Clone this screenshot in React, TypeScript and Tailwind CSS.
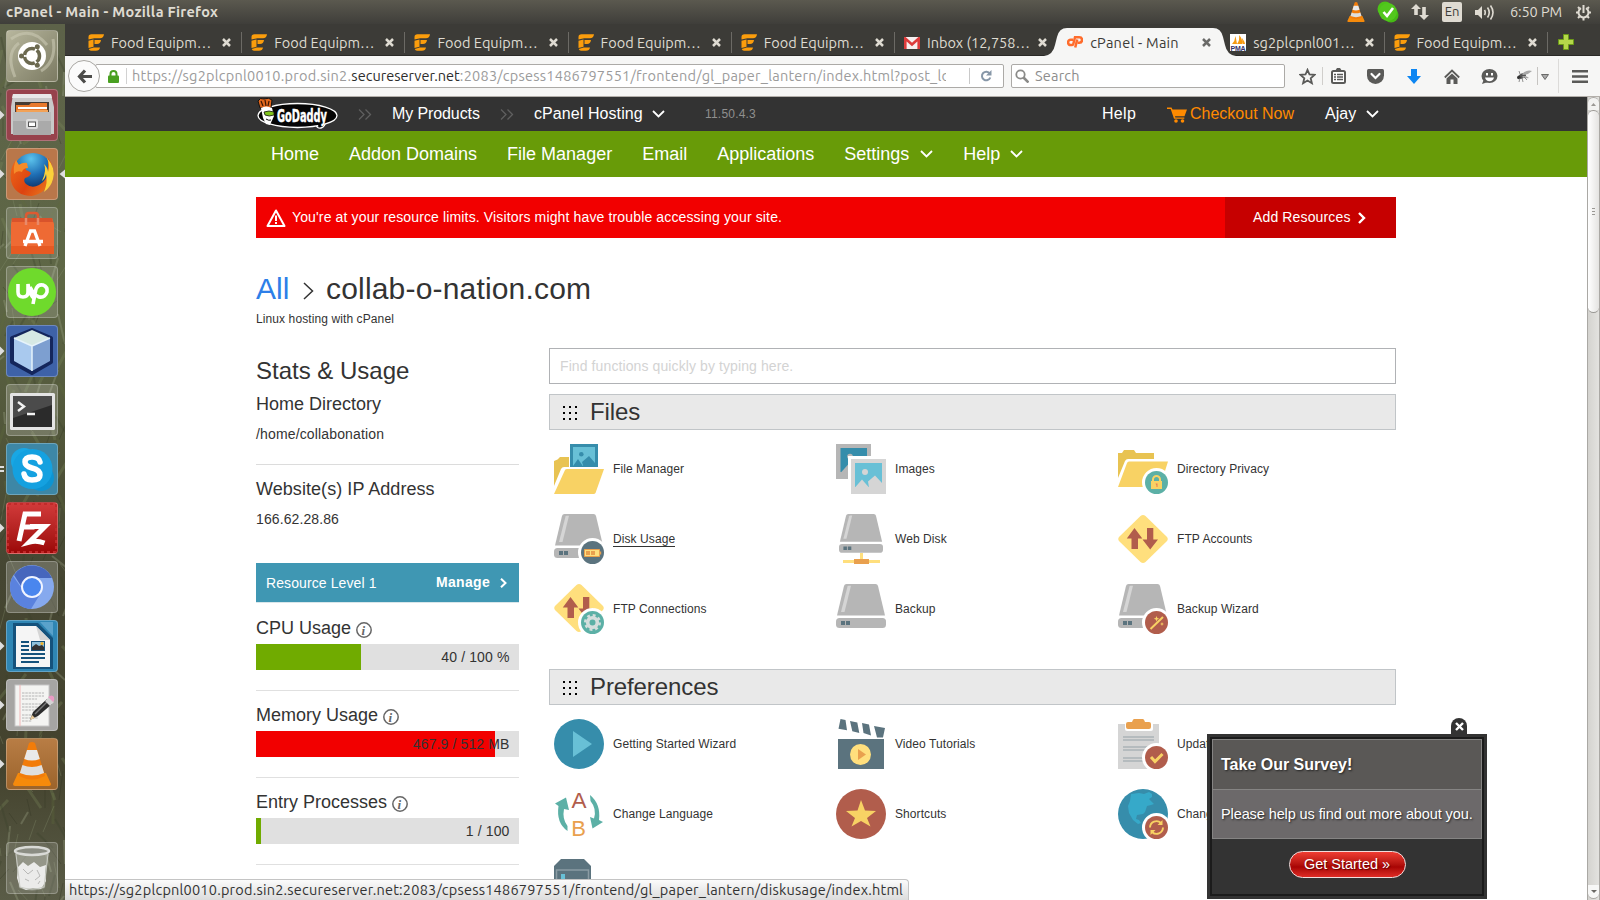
import type { ReactNode } from "react";

const ubuntu = "font-['Ubuntu','Open_Sans','Noto_Sans',sans-serif]";
const helv = "font-['Liberation_Sans',Arial,sans-serif]";

/* ---------- shared glyphs ---------- */

function Chevron({ className }: { className?: string }) {
  return (
    <svg className={className} width="13" height="8" viewBox="0 0 13 8" fill="none" stroke="#fff" strokeWidth="1.8">
      <path d="M1 1l5.5 5.5L12 1" />
    </svg>
  );
}

function Cross({ color }: { color: string }) {
  return (
    <svg width="9" height="9" viewBox="0 0 9 9" stroke={color} strokeWidth="2.5" className="shrink-0">
      <path d="M1 1l7 7M8 1L1 8" />
    </svg>
  );
}

function Cone({ size }: { size: number }) {
  return (
    <svg width={size} height={size} viewBox="0 0 40 44">
      <path d="M6 31h28l5 11q0 2-2 2H3q-2 0-2-2z" fill="#f58a0b" />
      <path d="M17 1q3-2 6 0l10 33q-13 7-26 0z" fill="#f27c0a" />
      <path d="M15 8h10l2.800 9q-8 3-15.600 0z" fill="#e9e9e9" />
      <path d="M10.400 23q9.500 4 19.200 0l2.500 8q-12 5-24.200 0z" fill="#dedede" />
    </svg>
  );
}

/* ---------- system bar ---------- */

function SystemBar() {
  return (
    <div className="flex h-6 items-center bg-linear-to-b from-[#5b594f] to-[#3f3e3a] pr-2 pl-[6px] text-[#dfdbd2]">
      <div className="flex-1 text-[14.5px] leading-6 font-bold tracking-[0.29px]">cPanel - Main - Mozilla Firefox</div>
      <div className="flex items-center">
        <div className="mr-[11px]"><Cone size={20} /></div>
        <svg width="22" height="22" viewBox="0 0 22 22" className="mr-[12px]">
          <circle cx="8" cy="8" r="7.500" fill="#4cc417" />
          <circle cx="14" cy="14" r="7.500" fill="#45b915" />
          <circle cx="11" cy="11" r="9" fill="#52c71d" />
          <path d="M6.500 11l3.500 4 6-8" fill="none" stroke="#fff" strokeWidth="2.600" />
        </svg>
        <svg width="18" height="16" viewBox="0 0 18 16" fill="#dfdbd2" className="mr-[13px]">
          <path d="M5 0l5 5H6.800v6H3.200V5H0zM13 16l-5-5h3.200V3h3.600v8H18z" />
        </svg>
        <div className="mr-[12px] flex h-5 w-5 items-center justify-center rounded-[2px] bg-[#dfdbd2] text-[13px] text-[#3c3b37]">En</div>
        <svg width="21" height="17" viewBox="0 0 21 17" className="mr-[15px]" fill="none" stroke="#dfdbd2" strokeWidth="1.600">
          <path d="M1 6h3l4-4v13l-4-4H1z" fill="#dfdbd2" stroke="none" />
          <path d="M10.500 6q1.500 2.500 0 5M13.500 3.500q3.500 5 0 10M16.500 1.500q5 7 0 14" />
        </svg>
        <div className="mr-[12px] w-[53px] text-[14.5px] leading-6 tracking-[-0.1px] whitespace-nowrap">6:50 PM</div>
        <svg width="17" height="17" viewBox="0 0 17 17" fill="none" stroke="#dfdbd2" strokeWidth="2">
          <path d="M6 4.200a5 5 0 1 0 5 0M8.500 1v8" />
          <path d="M1 8.500h2M14 8.500h2M3 3l1.500 1.500M14 3l-1.500 1.500M3 14l1.500-1.500M14 14l-1.500-1.500M8.500 14v2.500" />
        </svg>
      </div>
    </div>
  );
}

/* ---------- launcher ---------- */

const streaks = Array.from({ length: 260 }, (_, i) => {
  const x = (i * 37) % 72;
  const y = (i * 97) % 880;
  const dx = ((i * 13) % 34) - 17;
  const dy = 8 + ((i * 7) % 24);
  const color = ["#8b9573", "#39412a", "#7c8a5c", "#2e3120", "#a5ad8e", "#5f6b3c"][i % 6];
  return { x, y, dx, dy, color };
});

function Foliage() {
  return (
    <svg className="absolute inset-0" width="65" height="876" viewBox="0 0 65 876">
      <defs>
        <linearGradient id="leafBase" x1="0" y1="0" x2="0" y2="1">
          <stop offset="0" stopColor="#5d6249" />
          <stop offset="0.3" stopColor="#5e6745" />
          <stop offset="0.500" stopColor="#4f5338" />
          <stop offset="0.620" stopColor="#454632" />
          <stop offset="0.850" stopColor="#44432e" />
          <stop offset="1" stopColor="#5a5c47" />
        </linearGradient>
      </defs>
      <rect width="65" height="876" fill="url(#leafBase)" />
      {streaks.map((s, i) => (
        <path key={i} d={`M${s.x} ${s.y}l${s.dx} ${s.dy}`} stroke={s.color} strokeWidth={1 + (i % 3)} opacity="0.300" />
      ))}
    </svg>
  );
}

function Tile({ bg, mark, active, children }: { bg: string; mark?: "one" | "two"; active?: boolean; children: ReactNode }) {
  return (
    <div className="flex h-[52px] w-[65px] shrink-0 items-center">
      <svg width="6" height="12" viewBox="0 0 6 12" fill="#dedede" className="shrink-0">
        {mark === "one" && <path d="M0 1.500L4.500 6 0 10.500z" />}
        {mark === "two" && <path d="M0 3h4v2H0zM0 7h4v2H0z" />}
      </svg>
      <div className={`flex h-[52px] w-[52px] items-center justify-center overflow-hidden rounded-[4px] border border-white/25 ${bg}`}>
        {children}
      </div>
      {active && (
        <svg width="6" height="12" viewBox="0 0 6 12" fill="#dedede" className="ml-px shrink-0">
          <path d="M6 1.500L0.500 6 6 10.500z" />
        </svg>
      )}
    </div>
  );
}

function Launcher() {
  return (
    <aside className="relative h-[876px] w-[65px] shrink-0 overflow-hidden">
      <Foliage />
      <div className="relative flex h-full flex-col gap-[7px] pt-[6px]">
        <Tile bg="bg-linear-to-br from-[#b7b69d] to-[#7c7b63]">
          <svg width="50" height="50" viewBox="0 0 50 50">
            <path d="M4 8q20-14 36 6M46 8q4 22-12 32M8 46Q-2 22 12 12" fill="none" stroke="#c9c8b3" strokeWidth="3" opacity="0.600" />
            <circle cx="25" cy="25" r="14" fill="#fff" />
            <circle cx="25" cy="25" r="7.500" fill="none" stroke="#6b6950" strokeWidth="3.500" strokeDasharray="13.700 2" strokeDashoffset="6.850" />
            <circle cx="14.500" cy="25" r="2.500" fill="#6b6950" />
            <circle cx="30.300" cy="15.800" r="2.500" fill="#6b6950" />
            <circle cx="30.300" cy="34.200" r="2.500" fill="#6b6950" />
          </svg>
        </Tile>
        <Tile bg="bg-[#97424c]" mark="one">
          <svg width="50" height="50" viewBox="0 0 50 50">
            <path d="M6 4h38l3 13v27H4V17z" fill="#c9c9c9" />
            <path d="M6 4h38l1 4H5z" fill="#e8e8e8" />
            <path d="M8 12h34v12H8z" fill="#463b33" />
            <path d="M9 15h13l2-2h16v10H9z" fill="#e8792d" />
            <path d="M11 17h29v2H11z" fill="#fff" />
            <path d="M10 20h31v4H10z" fill="#f2a257" />
            <path d="M6 22h38v23H6z" fill="#aaaaaa" />
            <path d="M6 22h38v9H6z" fill="#bcbcbc" />
            <rect x="19" y="29" width="12" height="10" rx="2" fill="#ddd" />
            <rect x="21.500" y="32" width="7" height="4.500" fill="#fff" stroke="#555" />
          </svg>
        </Tile>
        <Tile bg="bg-[#b9774a]" mark="one" active>
          <svg width="50" height="50" viewBox="0 0 50 50">
            <defs>
              <radialGradient id="ocean" cx="0.450" cy="0.150" r="0.800">
                <stop offset="0" stopColor="#5cc3ec" />
                <stop offset="0.500" stopColor="#1f6fb5" />
                <stop offset="1" stopColor="#0b2a5c" />
              </radialGradient>
              <linearGradient id="fox" x1="0" y1="0" x2="1" y2="0.600">
                <stop offset="0" stopColor="#ee6a1a" />
                <stop offset="0.600" stopColor="#dd4310" />
                <stop offset="1" stopColor="#e8701a" />
              </linearGradient>
            </defs>
            <circle cx="26" cy="24" r="20" fill="url(#ocean)" />
            <path d="M41 9q7 9 4 20-5 15-20 18Q8 47 4 32q-2-13 5-21l2 5q3-2 7-1l1 6q3 1 5 3-1 4-6 5-2 3 1 6 6 5 13 1 9-5 9-15z" fill="url(#fox)" />
            <path d="M40 9q9 10 6 21-2 8-9 13 4-10 2-18-1 5-4 7 5-11 2-17 4 4 4 8 2-7-1-14z" fill="#fbd13a" />
            <path d="M9 11l3 5q4-3 8-2l1 5q-5 0-6 4-5-2-8 2-1-8 2-14z" fill="#f58b2a" />
          </svg>
        </Tile>
        <Tile bg="bg-white/15">
          <svg width="50" height="50" viewBox="0 0 50 50">
            <path d="M19 17V8q0-3 3-3h6q3 0 3 3v9" fill="none" stroke="#dc5a31" strokeWidth="2.500" />
            <path d="M5 10h40l2 6v30H4V16z" fill="#ee6a34" />
            <path d="M5 10h40l1 4H5z" fill="#d9532b" />
            <path d="M19 17V10M31 17V10" stroke="#e88a6a" strokeWidth="2.500" />
            <path d="M4 38h43v8H4z" fill="#e65a23" />
            <path d="M18 38l5.500-15h4L33 38M16 33.500h20" fill="none" stroke="#fff" strokeWidth="3.300" />
          </svg>
        </Tile>
        <Tile bg="bg-white/15">
          <svg width="50" height="50" viewBox="0 0 50 50">
            <circle cx="25" cy="25" r="24" fill="#6fda2c" />
            <path d="M11 17v8q0 5 5 5t5-5v-8q1 11 7 15M26 37l3-15q2-5 7-4 5 2 4 7-2 6-8 5-5-2-9-10" fill="none" stroke="#fff" strokeWidth="3.600" />
          </svg>
        </Tile>
        <Tile bg="bg-[#3e62a8]" mark="one">
          <svg width="50" height="50" viewBox="0 0 50 50" strokeLinejoin="round">
            <path d="M25 4l19 8v24L25 47 5 36V12z" fill="#14265c" stroke="#14265c" strokeWidth="4" />
            <path d="M25 4l18 8-18 8L7 12z" fill="#d6e9e4" />
            <path d="M7 12l18 8v25L7 35z" fill="#a9c9ee" />
            <path d="M43 12l-18 8v25l18-10z" fill="#7d9fd0" />
            <path d="M25 20v25M7 12l18 8 18-8" fill="none" stroke="#e6f3fb" strokeWidth="1.500" />
          </svg>
        </Tile>
        <Tile bg="bg-white/20">
          <svg width="50" height="50" viewBox="0 0 50 50">
            <rect x="3" y="8" width="45" height="37" rx="1.500" fill="#e4e4e4" />
            <rect x="6" y="11" width="39" height="31" fill="#2b2b2b" />
            <path d="M6 11h39v9L6 33z" fill="#4b4b4b" />
            <path d="M11 17l6 4.500-6 4.500M20 29h8" fill="none" stroke="#f2f2f2" strokeWidth="2.400" />
          </svg>
        </Tile>
        <Tile bg="bg-[#3d87a6]" mark="two">
          <svg width="50" height="50" viewBox="0 0 50 50">
            <circle cx="17" cy="17" r="13" fill="#19a7e4" />
            <circle cx="34" cy="34" r="13" fill="#0d94d2" />
            <circle cx="25.500" cy="25" r="20" fill="#14a1e0" />
            <path d="M33 18q-1-5-8-5-7 0-7 5 0 4 7 6 8 2 8 7 0 5-8 5-7 0-8-6" fill="none" stroke="#fff" strokeWidth="5.500" strokeLinecap="round" />
          </svg>
        </Tile>
        <Tile bg="bg-linear-to-b from-[#d23a3a] to-[#9c0606]" mark="one">
          <svg width="50" height="50" viewBox="0 0 50 50">
            <rect x="1" y="1" width="48" height="48" fill="none" stroke="#c22a2a" strokeWidth="2" strokeDasharray="3 3" />
            <path d="M12 38l6-27h16M15.500 24h12M23 23.500h15L22.500 39q7-2 15 1" fill="none" stroke="#fff" strokeWidth="5" />
          </svg>
        </Tile>
        <Tile bg="bg-white/20">
          <svg width="50" height="50" viewBox="0 0 50 50">
            <circle cx="25" cy="25" r="22" fill="#86a9ee" />
            <path d="M25 25V16h20A22 22 0 0 0 7 13l9 14z" fill="#4666bd" />
            <path d="M6 14A22 22 0 0 0 24 47l8-13-14-3z" fill="#5a82de" />
            <circle cx="25" cy="25" r="10" fill="#4a86ee" stroke="#f0f4ff" strokeWidth="2" />
          </svg>
        </Tile>
        <Tile bg="bg-[#2f86b4]" mark="one">
          <svg width="50" height="50" viewBox="0 0 50 50">
            <path d="M6 2h25l15 15v31H6z" fill="#15527c" />
            <path d="M33 1h13v14z" fill="#5aa2cb" />
            <path d="M9 5h20l14 14v27H9z" fill="#f5f5f5" />
            <path d="M29 5l14 14H33z" fill="#d5d5d5" />
            <path d="M14 20h8v2h-8zM14 24h8v2h-8zM14 28h8v2h-8zM14 32h24v2H14zM14 36h24v2H14zM14 40h18v2H14z" fill="#15527c" />
            <rect x="24" y="20" width="14" height="10" fill="#15527c" />
            <path d="M25 21h12v8H25z" fill="#8fc1dc" />
            <path d="M25 29v-3l4-3 3 2 3-1 2 2v3z" fill="#333" />
            <circle cx="35" cy="22.500" r="1.600" fill="#f2b32a" />
          </svg>
        </Tile>
        <Tile bg="bg-[#a6a5a3]" mark="one">
          <svg width="50" height="50" viewBox="0 0 50 50">
            <rect x="8" y="5" width="34" height="41" fill="#f4f4f2" stroke="#c8c8c8" />
            <path d="M13 5v41" stroke="#f2b6b6" />
            <path d="M15 13h22M15 16h22M15 19h15M15 24h22M15 27h19M15 30h20M15 35h13M15 38h16M15 41h10" stroke="#b4b4b4" strokeDasharray="2.500 0.800" />
            <path d="M23 40l3-8 14-13 5 5-14 12z" fill="#2d2d2d" />
            <path d="M28 34l13-13" stroke="#777" strokeWidth="1.500" />
            <path d="M38 21l4-4 5 5-4 4z" fill="#d4d4d4" />
            <path d="M41 17q4-3 6 0 1 3-1 5z" fill="#ea9bc4" />
            <path d="M23 40l2-5 3 3z" fill="#eacb9a" />
          </svg>
        </Tile>
        <Tile bg="bg-linear-to-b from-[#b87d45] to-[#9b642b]" mark="one">
          <Cone size={44} />
        </Tile>
        <div className="mt-auto mb-[6px]">
          <Tile bg="bg-white/15">
            <svg width="50" height="50" viewBox="0 0 50 50">
              <path d="M8 7h34l-4 38q-13 5-26 0z" fill="#dfe2dc" opacity="0.350" />
              <path d="M11 24l5-5 5 4 6-4 6 5 6-2-1 9 1 7-5 8-8-1-7 2-6-3-3-9z" fill="#ebebea" />
              <path d="M16 26l5 5 5-4M30 27l3 6-5 4M18 36l4 2M31 41l2-3" fill="none" stroke="#b8b8b6" strokeWidth="1" />
              <ellipse cx="25" cy="8" rx="17" ry="4" fill="#8b8d83" stroke="#d9dad6" strokeWidth="2.500" />
              <path d="M9 11l4 33q12 4 24 0l4-33" fill="none" stroke="#c9cbc4" strokeWidth="1" />
            </svg>
          </Tile>
        </div>
      </div>
    </aside>
  );
}

/* ---------- browser chrome ---------- */

function FoodIcon() {
  return (
    <svg width="16" height="17" viewBox="0 0 16 17" fill="#fb9d0c" className="shrink-0">
      <path d="M.5 3Q.5.3 3.500.3H16Q15.500 4.300 12 4.300H6.200L.5 5.600z" />
      <path d="M.5 6.700l5-1.200v7.300L.5 14z" />
      <path d="M6.500 6H13q-.5 4-4 4H6.500zM.7 15l5-1.500H12q-.6 3.300-4 3.300H3Q1.300 16.800.7 15z" />
    </svg>
  );
}

function Tab({ icon, label, sep = true }: { icon: ReactNode; label: string; sep?: boolean }) {
  return (
    <div className={`mt-[8px] mb-[2px] flex w-[163.2px] shrink-0 items-center border-r pr-[10px] pl-[9px] ${sep ? "border-[#6c6a65]" : "border-transparent"}`}>
      <div className="w-4 shrink-0">{icon}</div>
      <div className="ml-[7px] flex-1 text-[14.5px] leading-[19px] tracking-[0px] whitespace-nowrap text-[#dfdbd2]">{label}</div>
      <Cross color="#dfdbd2" />
    </div>
  );
}

function TabStrip() {
  return (
    <div className="flex h-[32px] border-b border-[#2a2926] bg-[#3c3b37] pl-[14px]">
      <Tab icon={<FoodIcon />} label="Food Equipm…" />
      <Tab icon={<FoodIcon />} label="Food Equipm…" />
      <Tab icon={<FoodIcon />} label="Food Equipm…" />
      <Tab icon={<FoodIcon />} label="Food Equipm…" />
      <Tab icon={<FoodIcon />} label="Food Equipm…" />
      <Tab
        sep={false}
        label="Inbox (12,758…"
        icon={
          <svg width="16" height="12" viewBox="0 0 16 12">
            <rect width="16" height="12" rx="1" fill="#f6efef" />
            <path d="M1.300 12V1.500L8 7.500l6.700-6V12" fill="none" stroke="#dd3b3b" strokeWidth="2.600" />
          </svg>
        }
      />
      <div className="relative flex w-[163.2px] shrink-0 items-center pt-[5px] pr-[10px] pl-[9px]">
        <svg className="absolute -left-[14px] top-[4px]" width="192" height="28" viewBox="0 0 192 28" fill="#f6f6f5">
          <path d="M0 28q9-1 11-11l2-8Q15 0 23 0h146q8 0 10 9l2 8q2 10 11 11z" />
        </svg>
        <svg width="16" height="12" viewBox="0 0 16 12" fill="none" stroke="#ff6c2c" strokeWidth="2.500" className="relative shrink-0">
          <path d="M6 3.700H3.800a2.700 2.700 0 0 0 0 5.400H5.200Q6 9.100 6.300 8L8 1.300h4.300a2.700 2.700 0 0 1 0 5.400H10.500" />
          <path d="M10.200 3.500L8.200 11.500" />
        </svg>
        <div className="relative ml-[7px] flex-1 text-[14.5px] leading-[19px] tracking-[0.25px] whitespace-nowrap text-[#3c3b37]">cPanel - Main</div>
        <div className="relative"><Cross color="#6a6a68" /></div>
      </div>
      <Tab
        label="sg2plcpnl001…"
        icon={
          <svg width="16" height="17" viewBox="0 0 16 17">
            <rect width="16" height="17" fill="#fff" />
            <path d="M2 10q3-3 3.500-8L7 10zM7 10q3-4 2-9 4 4 3 9zM12.500 10l-.5-6q3 4 3 6z" fill="#f69a0f" />
            <text x="0.500" y="16.500" fontSize="7" fontWeight="700" fill="#33336b" fontFamily="Liberation Sans" textLength="15">PMA</text>
          </svg>
        }
      />
      <Tab icon={<FoodIcon />} label="Food Equipm…" />
      <svg width="16" height="16" viewBox="0 0 16 16" className="mt-[10px] ml-[10px]">
        <path d="M5.500.5h5v5h5v5h-5v5h-5v-5h-5v-5h5z" fill="#b5d84a" stroke="#6c9a18" />
      </svg>
    </div>
  );
}

function ToolbarIcon({ w, children }: { w: string; children: ReactNode }) {
  return <div className={`flex shrink-0 items-center justify-center ${w}`}>{children}</div>;
}

function NavToolbar() {
  const ink = "#5a5a58";
  return (
    <div className="flex h-[41px] items-center border-b border-[#b3afaa] bg-[#f6f6f5]">
      <div className="relative z-10 ml-[3px] flex h-8 w-8 shrink-0 items-center justify-center rounded-full border border-[#a9a7a3] bg-[#fbfbfb]">
        <svg width="15" height="15" viewBox="0 0 15 15" fill="none" stroke="#4c4c4a" strokeWidth="3.200">
          <path d="M8 1.500L2.500 7.500 8 13.500M3 7.500h12" />
        </svg>
      </div>
      <div className="-ml-[5px] flex h-6 w-[909px] shrink-0 items-center rounded-[2px] border border-[#acaaa7] bg-white pl-[12px]">
        <svg width="11" height="13" viewBox="0 0 11 13" className="shrink-0">
          <path d="M2.500 7V4a3 3 0 0 1 6 0v3" fill="none" stroke="#49a021" strokeWidth="2" />
          <rect y="5.500" width="11" height="7.500" rx="1" fill="#49a021" />
        </svg>
        <div className="ml-[7px] h-4 w-px bg-[#d2d2d2]" />
        <div className="ml-[5px] w-[814px] overflow-hidden text-[14.5px] leading-[22px] tracking-[0.24px] whitespace-nowrap text-[#9b9b9b]">
          https://sg2plcpnl0010.prod.sin2.<span className="tracking-[0.01px] text-[#2c2c2c]">secureserver.net</span>:2083/cpsess1486797551/frontend/gl_paper_lantern/index.html?post_login=4
        </div>
        <div className="ml-auto h-4 w-px shrink-0 bg-[#c9c9c9]" />
        <svg width="12" height="12" viewBox="0 0 12 12" className="mr-[11px] ml-[10px] shrink-0">
          <path d="M9.800 3.500A4.300 4.300 0 1 0 10.300 7.500" fill="none" stroke="#8797a8" strokeWidth="2" />
          <path d="M11.500 0v5.500H6z" fill="#8797a8" />
        </svg>
      </div>
      <div className="ml-[7px] flex h-6 w-[274px] shrink-0 items-center rounded-[2px] border border-[#acaaa7] bg-white pl-[3px]">
        <svg width="14" height="14" viewBox="0 0 14 14" fill="none" stroke="#8a8a88">
          <circle cx="5.500" cy="5.500" r="4.200" strokeWidth="1.800" />
          <path d="M8.500 8.500l5 5" strokeWidth="2.600" />
        </svg>
        <div className="ml-[6px] text-[14.5px] leading-[22px] tracking-[0.2px] text-[#8d8d8d]">Search</div>
      </div>
      <div className="flex h-full items-center pl-[11px]">
        <ToolbarIcon w="w-[22px]">
          <svg width="17" height="17" viewBox="0 0 17 17" fill="none" stroke={ink} strokeWidth="1.800">
            <path d="M8.500 1.800l2 4.700 5 .4-3.800 3.300 1.200 5-4.400-2.700-4.400 2.700 1.200-5L1.500 6.900l5-.4z" />
          </svg>
        </ToolbarIcon>
        <div className="ml-[4px] h-[18px] w-px bg-[#d0cecb]" />
        <ToolbarIcon w="w-[30px]">
          <svg width="15" height="16" viewBox="0 0 15 16">
            <rect x="1" y="3" width="13" height="12" rx="1.500" fill="#fff" stroke={ink} strokeWidth="2" />
            <path d="M4 3l2-3h3l2 3z" fill={ink} />
            <path d="M3 6.500h2M3 9h2M3 11.500h2M6 6.500h6M6 9h6M6 11.500h6" stroke={ink} strokeWidth="1.300" />
          </svg>
        </ToolbarIcon>
        <ToolbarIcon w="w-[45px]">
          <svg width="17" height="15" viewBox="0 0 17 15">
            <path d="M1.500 0h14q1.500 0 1.500 1.500V6.500a8.500 8.500 0 0 1-17 0V1.500Q0 0 1.500 0z" fill={ink} />
            <path d="M4.500 5l4 4 4-4" fill="none" stroke="#fff" strokeWidth="2.200" strokeLinecap="round" />
          </svg>
        </ToolbarIcon>
        <ToolbarIcon w="w-[31px]">
          <svg width="14" height="15" viewBox="0 0 14 15" fill="#0d86f2">
            <path d="M4 0h6v7h4l-7 8-7-8h4z" />
          </svg>
        </ToolbarIcon>
        <ToolbarIcon w="w-[45px]">
          <svg width="16" height="15" viewBox="0 0 16 15">
            <path d="M.8 8.500L8 1.500l7.200 7" fill="none" stroke={ink} strokeWidth="1.800" />
            <path d="M2.500 9.500L8 4.500l5.500 5V15H9.500v-4.500h-3V15h-4z" fill={ink} />
          </svg>
        </ToolbarIcon>
        <ToolbarIcon w="w-[31px]">
          <svg width="17" height="15" viewBox="0 0 17 15">
            <ellipse cx="8.500" cy="7" rx="8" ry="7" fill={ink} />
            <path d="M1 15l2-5 4 3z" fill={ink} />
            <path d="M4 8.500h9q-1 3.800-4.500 3.800T4 8.500z" fill="#fff" />
            <path d="M5 4h2v2.500H5zM10 4h2v2.500h-2z" fill="#fff" />
          </svg>
        </ToolbarIcon>
        <ToolbarIcon w="w-[38px]">
          <svg width="16" height="14" viewBox="0 0 16 14">
            <ellipse cx="6" cy="7" rx="4" ry="2.600" fill="#555" transform="rotate(-25 6 7)" />
            <circle cx="2.800" cy="8.500" r="1.800" fill="#333" />
            <path d="M6 5q5-5 10-3-4 4-9 4zM7 7q4 0 6 2-4 1-7-1z" fill="#a8a8a8" />
            <path d="M4 9l-1 4M6 9l1 4M8 8l3 3M4 5L3 2" stroke="#777" strokeWidth="0.800" />
          </svg>
        </ToolbarIcon>
        <div className="-ml-[6px] h-[18px] w-px bg-[#c6c4c1]" />
        <svg width="8" height="6" viewBox="0 0 8 6" className="mt-[2px] ml-[3px]">
          <path d="M.5.5h7l-3.500 5z" fill="#aaa" stroke="#6a6a68" />
        </svg>
        <div className="ml-[9px] h-[34px] w-px bg-[#dcdbd9]" />
        <svg width="16" height="13" viewBox="0 0 16 13" fill={ink} className="ml-[13px]">
          <path d="M0 0h16v2.600H0zM0 5.200h16v2.600H0zM0 10.400h16V13H0z" />
        </svg>
      </div>
    </div>
  );
}

/* ---------- hosting header ---------- */

function Logo() {
  return (
    <svg width="82" height="32" viewBox="0 0 82 32" className="shrink-0">
      <path d="M60 26q1 5 5 4 4-1 5-7" fill="#050505" stroke="#fff" strokeWidth="1.300" />
      <ellipse cx="41.500" cy="17.500" rx="39.500" ry="12" fill="#050505" stroke="#fff" strokeWidth="1.300" />
      <path d="M61 25q1 4 4 3.500 3-1 4-6z" fill="#050505" />
      <path d="M2 3q2-4 6-2 5-2 8 1l-1 8H4z" fill="#e0661c" stroke="#111" strokeWidth="1" />
      <path d="M5 3l2 5M9 2l1 6M13 3l-1 5" stroke="#3a1605" strokeWidth="1.200" />
      <path d="M5 10q5-3 11 0l2 8-4 9-4-1-3-6z" fill="#fff" />
      <path d="M8 14q5-2 10 0v3q-5 2-9 0z" fill="#7fc41c" stroke="#111" strokeWidth="0.800" />
      <path d="M10 21q3 2 5 1" stroke="#111" fill="none" />
      <text x="21" y="23.500" fontSize="17" fontWeight="700" fill="#fff" stroke="#fff" strokeWidth="0.400" fontFamily="'DejaVu Sans Condensed','DejaVu Sans',sans-serif" textLength="50" lengthAdjust="spacingAndGlyphs">GoDaddy</text>
    </svg>
  );
}

function Arrows({ className }: { className?: string }) {
  return (
    <svg width="14" height="11" viewBox="0 0 14 11" fill="none" stroke="#5f5f5f" strokeWidth="1.300" className={className}>
      <path d="M1 .5l5 5-5 5M7.500.5l5 5-5 5" />
    </svg>
  );
}

function AccountBar() {
  return (
    <div className="flex h-[34px] items-center bg-[#333] pl-[191px] text-[16px] leading-[36px] whitespace-nowrap text-white">
      <Logo />
      <Arrows className="ml-[20px]" />
      <div className="ml-[20px] w-[89px] tracking-[-0.1px]">My Products</div>
      <Arrows className="ml-[19px]" />
      <div className="ml-[20px] w-[110px] tracking-[0.08px]">cPanel Hosting</div>
      <Chevron className="ml-[8px]" />
      <div className="ml-[40px] w-[52px] text-[12px] tracking-[0.2px] text-[#8f8f8f]">11.50.4.3</div>
      <div className="ml-[345px] w-[35px] tracking-[0.3px]">Help</div>
      <svg width="20" height="16" viewBox="0 0 20 16" className="mt-px ml-[30px]" fill="#ff8a00">
        <path d="M0 .5h4.500l1 2H20l-2.500 6.800H8l.3 1.200h9v1.300H7L3.700 2H0z" />
        <circle cx="9" cy="14" r="1.800" />
        <circle cx="15.500" cy="14" r="1.800" />
      </svg>
      <div className="ml-[3px] w-[105px] text-[#ff8a00]">Checkout Now</div>
      <div className="ml-[30px] w-[33px]">Ajay</div>
      <Chevron className="ml-[8px]" />
    </div>
  );
}

function GreenNav() {
  return (
    <nav className="flex h-[46px] items-center gap-[30px] bg-[#689b08] pl-[206px] text-[18px] leading-[46px] whitespace-nowrap text-white">
      <span>Home</span>
      <span>Addon Domains</span>
      <span>File Manager</span>
      <span>Email</span>
      <span>Applications</span>
      <span className="flex items-center gap-[11px]">Settings<Chevron /></span>
      <span className="flex items-center gap-[10px]">Help<Chevron /></span>
    </nav>
  );
}

/* ---------- left column ---------- */

function InfoDot() {
  return (
    <svg width="16" height="16" viewBox="0 0 16 16" className="mt-[3px]">
      <circle cx="8" cy="8" r="7.200" fill="none" stroke="#666" strokeWidth="1.500" />
      <text x="5.500" y="12.500" fontSize="13" fontStyle="italic" fontWeight="700" fill="#666" fontFamily="Liberation Serif">i</text>
    </svg>
  );
}

function Meter({ title, value, percent, fill }: { title: string; value: string; percent: number; fill: string }) {
  return (
    <div className="border-b border-[#e0e0e0] pb-[20px]">
      <div className="flex h-[26px] items-center gap-[5px] text-[18px] leading-[26px]">{title}<InfoDot /></div>
      <div className="relative mt-[3px] h-[26px] bg-[#e0e0e0] pr-[9.500px] text-right text-[14px] leading-[26px] tracking-[0.12px]">
        <div className={`absolute inset-y-0 left-0 ${fill}`} style={{ width: `${percent}%` }} />
        <span className="relative">{value}</span>
      </div>
    </div>
  );
}

function StatsColumn() {
  return (
    <section className="w-[263px] shrink-0">
      <h2 className="mt-[5px] text-[24px] leading-[36px]">Stats &amp; Usage</h2>
      <h3 className="mt-[3px] text-[18px] leading-[24px]">Home Directory</h3>
      <p className="mt-[8px] text-[14px] leading-[20px] tracking-[0.15px]">/home/collabonation</p>
      <div className="mt-[20px] h-px bg-[#dcdcdc]" />
      <h3 className="mt-[12px] text-[18px] leading-[24px] tracking-[0.06px]">Website(s) IP Address</h3>
      <p className="mt-[8px] text-[14px] leading-[20px] tracking-[0.1px]">166.62.28.86</p>
      <div className="mt-[34px] mb-[12px] flex h-[40px] items-center border-b border-[#d9e6ea] bg-[#3f97b3] px-[10px] text-[14px] text-white">
        <span className="pt-px tracking-[0.1px]">Resource Level 1</span>
        <span className="ml-auto font-bold tracking-[0.3px]">Manage</span>
        <svg width="7" height="10" viewBox="0 0 7 10" fill="none" stroke="#fff" strokeWidth="2" className="mr-[2px] ml-[10px]">
          <path d="M1 .7L5.500 5 1 9.300" />
        </svg>
      </div>
      <Meter title="CPU Usage" value="40 / 100 %" percent={40} fill="bg-[#70ab00]" />
      <div className="h-[11px]" />
      <Meter title="Memory Usage" value="467.9 / 512 MB" percent={91} fill="bg-[#f20000]" />
      <div className="h-[11px]" />
      <Meter title="Entry Processes" value="1 / 100" percent={2} fill="bg-[#70ab00]" />
    </section>
  );
}

/* ---------- function icons, all on a 50 unit grid ---------- */

function Icon50({ children }: { children: ReactNode }) {
  return <svg width="50" height="50" viewBox="0 0 50 50" className="shrink-0">{children}</svg>;
}

function Badge({ fill, children }: { fill: string; children: ReactNode }) {
  return (
    <g>
      <circle cx="38.500" cy="38.500" r="14.500" fill="#fff" />
      <circle cx="38.500" cy="38.500" r="11.500" fill={fill} />
      {children}
    </g>
  );
}

function DiskShape() {
  return (
    <g>
      <path d="M8 2q.5-2 2.500-2h29q2 0 2.500 2l7 29.500H1z" fill="#b6b6b6" />
      <path d="M11.500 2.500q.3-.8 1-.8H15L8.500 28H5z" fill="#d5d5d5" />
      <rect y="34" width="50" height="10" rx="3.500" fill="#b6b6b6" />
      <path d="M5 37h4v4H5zM10 37h4v4h-4z" fill="#5b737e" />
    </g>
  );
}

function FtpShape() {
  return (
    <g>
      <path d="M22.500 1q2.500-2 5 0l21.500 21q1.500 2 0 4L27.500 47q-2.500 2-5 0L1 26q-1.500-2 0-4z" fill="#ffdf7d" />
      <path d="M16.500 13L24.300 23.500H20V34h-6.500V23.500H8.800zM29 13h6.300v11.500H40L32.200 34.500 24.500 24.500H29z" fill="#b15d4c" />
    </g>
  );
}

function FileManagerIcon() {
  return (
    <Icon50>
      <path d="M0 17l3.500-1.500L6 13h9v10H10q-2 0-3 2L0 42z" fill="#e8c352" />
      <path d="M16 0h28v23H16z" fill="#368dab" />
      <path d="M19 3h22v19H19z" fill="#68c0d6" />
      <circle cx="27.300" cy="10.300" r="2.300" fill="#368dab" />
      <path d="M19 22l5-7 5.500 8-1.500-5 7-6 6 7v3.500H19z" fill="#368dab" />
      <path d="M11 26q.5-1 2-1h37l-8.500 24q-.5 1-2 1H0z" fill="#f8d264" />
    </Icon50>
  );
}

function ImagesIcon() {
  return (
    <Icon50>
      <path d="M0 0h35v35H0z" fill="#b6b6b6" />
      <path d="M4.500 4H31v24L4.500 28z" fill="#368dab" />
      <path d="M4.500 29l8-9 3 9z" fill="#b6b6b6" />
      <circle cx="14" cy="12.500" r="2.800" fill="#b6b6b6" />
      <path d="M12 12h38v38H12z" fill="#fff" />
      <path d="M15 15h35v35H15z" fill="#d5d5d5" />
      <path d="M19 19h27v24H19z" fill="#68c0d6" />
      <path d="M19 43.500l7-8 7 8-1-6 7-6 7 7.500v5H19z" fill="#d5d5d5" />
      <circle cx="29" cy="28" r="3" fill="#d5d5d5" />
    </Icon50>
  );
}

function PrivacyIcon() {
  return (
    <Icon50>
      <path d="M0 9h4l2-3h10l2 3h18v6H10q-2 0-3 2L0 34z" fill="#e8c352" />
      <path d="M9 19q.5-1.500 2-1.500h39L42 43H0z" fill="#f8d264" />
      <Badge fill="#5cb0a6">
        <path d="M35 38v-2.500a3.500 3.500 0 0 1 7 0V38" fill="none" stroke="#f8d264" strokeWidth="2" />
        <path d="M33 37h11v8H33z" fill="#f8d264" />
        <path d="M37.500 39.500h2V43h-1v-1.500z" fill="#e8804e" />
      </Badge>
    </Icon50>
  );
}

function DiskUsageIcon() {
  return (
    <Icon50>
      <DiskShape />
      <Badge fill="#5b737e">
        <path d="M30.500 35.500h15v7h-15z" fill="#ffdf7d" stroke="#e9a04e" />
        <path d="M32 37h4v4h-4zM37 37h4v4h-4zM46 37.500h1.200v3H46z" fill="#e9a04e" />
      </Badge>
    </Icon50>
  );
}

function WebDiskIcon() {
  return (
    <Icon50>
      <g transform="translate(3 0) scale(0.880)"><DiskShape /></g>
      <path d="M24 39h3v7h-3zM7 46h37v3H7z" fill="#ffdf7d" />
      <path d="M18 45h15v5H18z" fill="#e9a04e" />
    </Icon50>
  );
}

function FtpAccountsIcon() {
  return <Icon50><g transform="translate(0 1)"><FtpShape /></g></Icon50>;
}

function FtpConnectionsIcon() {
  return (
    <Icon50>
      <FtpShape />
      <Badge fill="#5cb0a6">
        <circle cx="38.500" cy="38.500" r="4.800" fill="none" stroke="#d5dedd" strokeWidth="3.600" />
        <circle cx="38.500" cy="38.500" r="7.300" fill="none" stroke="#d5dedd" strokeWidth="2.400" strokeDasharray="2.900 2.830" />
      </Badge>
    </Icon50>
  );
}

function BackupIcon() {
  return <Icon50><DiskShape /></Icon50>;
}

function BackupWizardIcon() {
  return (
    <Icon50>
      <DiskShape />
      <Badge fill="#b15d4c">
        <path d="M32.500 45L45 33" stroke="#f8d264" strokeWidth="2" />
        <path d="M38.500 32l.8 1.900 2 .8-2 .8-.8 1.900-.8-1.900-2-.8 2-.8zM44 38l.6 1.400 1.400.6-1.400.6L44 42l-.6-1.400L42 40l1.400-.6zM43.500 33.500l1 1M40.500 36l3 3" fill="#f8d264" />
      </Badge>
    </Icon50>
  );
}

function WizardIcon() {
  return (
    <Icon50>
      <circle cx="25" cy="25" r="25" fill="#368dab" />
      <path d="M19 12l19 13-19 13z" fill="#68c0d6" />
    </Icon50>
  );
}

function VideoIcon() {
  return (
    <Icon50>
      <g fill="#5b737e">
        <path d="M4.500 0l5 1 1.500 10.300-8.500-1.500zM14 2l7.300 1.500 2 10.500-7-1.700zM26 4l7 1.500 2 11-7.500-2.500zM38 7l11 2-2 9.500h-6z" />
        <path d="M2 20h46v30H2z" />
      </g>
      <circle cx="24.500" cy="35.500" r="10.500" fill="#ffdf7d" />
      <path d="M22 30l8 5.500-8 5.500z" fill="#e9a04e" />
    </Icon50>
  );
}

function UpdateIcon() {
  return (
    <Icon50>
      <path d="M0 5h41v45H0z" fill="#d5d5d5" />
      <path d="M7 5h28v5q0 2-2 2H9q-2 0-2-2z" fill="#fff" />
      <path d="M8 5q0-2 2-2h4q1-3 2-3h9q1 0 2 3h4q2 0 2 2v3q0 2-2 2H10q-2 0-2-2z" fill="#e9a04e" />
      <path d="M5 18h31M5 21h31M5 28h25M5 31h22M5 39h22M5 42h22" stroke="#aab3b7" strokeWidth="1.700" />
      <Badge fill="#b15d4c">
        <path d="M33 38l4 4.500 7.500-7.500" fill="none" stroke="#f8d264" strokeWidth="3" />
      </Badge>
    </Icon50>
  );
}

function LanguageIcon() {
  return (
    <Icon50>
      <text x="17.400" y="18.500" fontSize="22.500" fill="#b15d4c" fontFamily="Liberation Sans">A</text>
      <text x="17.300" y="47" fontSize="22" fill="#e9a04e" fontFamily="Liberation Sans">B</text>
      <g fill="#5cb0a6">
        <path d="M1 14.500L12 8.500l3 12.500-5-1q-2 10 3.500 17v5Q2 34 4.500 17z" />
        <path d="M36 6q11 9 9 25l4 2-10.500 6.500L36 28l4 1.500Q43 20 36.500 12z" />
      </g>
    </Icon50>
  );
}

function ShortcutsIcon() {
  return (
    <Icon50>
      <circle cx="25" cy="25" r="25" fill="#b15d4c" />
      <path d="M25 11l4 10.500 11 .5-9 7 3.500 8.500-9.500-5.500-9.500 5.500L19 29l-9-7 11.500-.5z" fill="#f8d264" />
    </Icon50>
  );
}

function GlobeIcon() {
  return (
    <Icon50>
      <circle cx="25" cy="25" r="25" fill="#368dab" />
      <path d="M13 5l8-1 5 1 5-2 3 2v3l-3 2 5 5-3 1-4 1-2 6-2 2-6 1-1 4 3 1 2 3-3 1-5-4-4-7-1-7 2-5z" fill="#36a9c9" />
      <Badge fill="#b15d4c">
        <path d="M32 38.500a6.500 6.500 0 0 1 11-4.500M45 38.500a6.500 6.500 0 0 1-11 4.500" fill="none" stroke="#f8d264" strokeWidth="1.900" />
        <path d="M44.500 31v5h-5zM32.500 46v-5h5z" fill="#f8d264" />
      </Badge>
    </Icon50>
  );
}

function ServerIcon() {
  return (
    <Icon50>
      <path d="M7 0h23l7 7v40H0V7z" fill="#5b737e" />
      <path d="M2.500 11h32v30h-32z" fill="none" stroke="#8b9ca4" strokeWidth="1.500" />
      <path d="M7 15h4v8H7z" fill="#68c0d6" />
    </Icon50>
  );
}

/* ---------- right column ---------- */

type Entry = { icon: ReactNode; label: string; underlined?: boolean };

const files: Entry[] = [
  { icon: <FileManagerIcon />, label: "File Manager" },
  { icon: <ImagesIcon />, label: "Images" },
  { icon: <PrivacyIcon />, label: "Directory Privacy" },
  { icon: <DiskUsageIcon />, label: "Disk Usage", underlined: true },
  { icon: <WebDiskIcon />, label: "Web Disk" },
  { icon: <FtpAccountsIcon />, label: "FTP Accounts" },
  { icon: <FtpConnectionsIcon />, label: "FTP Connections" },
  { icon: <BackupIcon />, label: "Backup" },
  { icon: <BackupWizardIcon />, label: "Backup Wizard" },
];

const preferences: Entry[] = [
  { icon: <WizardIcon />, label: "Getting Started Wizard" },
  { icon: <VideoIcon />, label: "Video Tutorials" },
  { icon: <UpdateIcon />, label: "Update Contact Info" },
  { icon: <LanguageIcon />, label: "Change Language" },
  { icon: <ShortcutsIcon />, label: "Shortcuts" },
  { icon: <GlobeIcon />, label: "Change Style" },
  { icon: <ServerIcon />, label: "" },
];

function Group({ title, items }: { title: string; items: Entry[] }) {
  return (
    <section>
      <header className="flex h-[36px] items-center border border-[#c1c5c8] bg-[#e9e9e9] pl-[13px]">
        <svg width="15" height="15" viewBox="0 0 15 15" className="mt-[3px]" shapeRendering="crispEdges">
          <path d="M0 0h2v2H0zM6 0h2v2H6zM12 0h2v2h-2zM0 6h2v2H0zM6 6h2v2H6zM12 6h2v2h-2zM0 12h2v2H0zM6 12h2v2H6zM12 12h2v2h-2z" />
        </svg>
        <h2 className="ml-[12px] text-[24px] leading-[34px] tracking-[-0.1px]">{title}</h2>
      </header>
      <div className="mt-[14px] grid grid-cols-[282px_282px_282px] gap-y-[20px] pl-[5px]">
        {items.map((item, i) => (
          <div key={i} className="flex h-[50px] items-center">
            {item.icon}
            <span className={`ml-[9px] text-[12px] leading-[14px] tracking-[0.08px] ${item.underlined ? "border-b border-[#333]" : ""}`}>{item.label}</span>
          </div>
        ))}
      </div>
    </section>
  );
}

function SurveyPopup() {
  return (
    <div className="absolute top-[637px] left-[1142px] w-[280px]">
      <div className="absolute -top-[16px] left-[244px] flex h-[17px] w-[16px] items-center justify-center rounded-t-[8px] bg-[#333]">
        <svg width="9" height="9" viewBox="0 0 9 9" stroke="#fff" strokeWidth="2.400"><path d="M1 1l7 7M8 1L1 8" /></svg>
      </div>
      <div className="h-[165px] border-[3px] border-[#333] bg-[#333]">
        <div className="h-full border-2 border-[#1b1b1b]">
          <div className="flex h-[51px] items-center border border-[#858483] bg-[#5a5856] pl-[8px] text-[16px] font-bold text-white [text-shadow:1px_1px_2px_#222]">Take Our Survey!</div>
          <div className="-mt-px flex h-[50px] items-center border border-[#858483] bg-[#6c696a] pt-px pl-[8px] text-[14.5px] tracking-[-0.1px] whitespace-nowrap text-white [text-shadow:1px_1px_2px_#222]">Please help us find out more about you.</div>
          <div className="mx-auto mt-[12px] flex h-[27px] w-[117px] items-center justify-center rounded-full border border-[#f3dcdc] bg-linear-to-b from-[#f03c32] via-[#a80404] via-60% to-[#e02a24] text-[14.5px] text-white [text-shadow:1px_1px_1px_#600]">Get Started »</div>
        </div>
      </div>
    </div>
  );
}

function Scrollbar() {
  return (
    <div className="flex w-[13px] shrink-0 flex-col border-x border-[#aaa8a4] bg-linear-to-r from-[#d4d3cf] to-[#e3e2df]">
      <div className="flex h-[13px] items-center justify-center rounded-t-[6px] border-t border-[#aaa8a4] bg-[#f2f2f1]">
        <svg width="5" height="3" viewBox="0 0 5 3" fill="#9a9894"><path d="M0 3l2.500-3L5 3z" /></svg>
      </div>
      <div className="flex h-[203px] items-center justify-center rounded-[6px] border-y border-[#9a9894] bg-linear-to-r from-white to-[#e4e3e1]">
        <svg width="3" height="8" viewBox="0 0 3 8" fill="#9a9894"><path d="M0 0h3v1H0zM0 3h3v1H0zM0 6h3v1H0z" /></svg>
      </div>
      <div className="mt-auto mb-px flex h-[14px] items-center justify-center rounded-b-[6px] border-b border-[#aaa8a4] bg-[#f7f7f6]">
        <svg width="6" height="3" viewBox="0 0 6 3" fill="#6a6864"><path d="M0 0h6L3 3z" /></svg>
      </div>
    </div>
  );
}

function HostingPage() {
  return (
    <main className={`relative h-[803px] w-[1522px] shrink-0 overflow-hidden bg-white text-[#333] ${helv}`}>
      <AccountBar />
      <GreenNav />
      <div className="ml-[191px] w-[1140px]">
        <div className="mt-[20px] flex h-[41px] items-stretch bg-[#f20000] text-[14px] text-white">
          <div className="flex flex-1 items-center pl-[10px]">
            <svg width="20" height="18" viewBox="0 0 20 18" className="mt-px">
              <path d="M10 1.500l8.500 15.500H1.500z" fill="none" stroke="#fff" strokeWidth="2" strokeLinejoin="round" />
              <path d="M9 6.500h2V12H9zM9 13h2v2H9z" fill="#fff" />
            </svg>
            <span className="ml-[6px] tracking-[0.14px]">You&#39;re at your resource limits. Visitors might have trouble accessing your site.</span>
          </div>
          <div className="flex w-[171px] items-center bg-[#c60000] pl-[28px]">
            <span className="tracking-[0.14px]">Add Resources</span>
            <svg width="8" height="12" viewBox="0 0 8 12" fill="none" stroke="#fff" strokeWidth="2.400" className="mt-px ml-[7px]">
              <path d="M1 1l5 5-5 5" />
            </svg>
          </div>
        </div>
        <h1 className="mt-[29px] flex h-[43px] items-center text-[30px] leading-[43px]">
          <span className="w-[34px] text-[#2d7fe8]">All</span>
          <svg width="11" height="18" viewBox="0 0 11 18" fill="none" stroke="#333" strokeWidth="1.500" className="mt-[5px] ml-[13px]">
            <path d="M1 1l8.500 8L1 17" />
          </svg>
          <span className="ml-[12px] tracking-[0.18px]">collab-o-nation.com</span>
        </h1>
        <p className="text-[12px] leading-[18px] tracking-[0.1px]">Linux hosting with cPanel</p>
        <div className="mt-[20px] flex">
          <StatsColumn />
          <div className="ml-[30px] w-[847px]">
            <div className="mb-[10px] flex h-[36px] items-center border border-[#b0b2b5] bg-white pl-[10px] text-[14px] tracking-[0.1px] text-[#d3d3d3]">Find functions quickly by typing here.</div>
            <Group title="Files" items={files} />
            <div className="h-[35px]" />
            <Group title="Preferences" items={preferences} />
          </div>
        </div>
      </div>
      <SurveyPopup />
      <div className={`absolute bottom-0 left-0 flex h-[21px] w-[844px] items-center rounded-tr-[4px] border-t border-r border-[#c4c4c4] bg-linear-to-b from-[#fbfbfb] to-[#dcdcdc] pl-[4px] text-[14.5px] tracking-[0.21px] whitespace-nowrap text-[#333] ${ubuntu}`}>
        https://sg2plcpnl0010.prod.sin2.secureserver.net:2083/cpsess1486797551/frontend/gl_paper_lantern/diskusage/index.html
      </div>
    </main>
  );
}

export default function App() {
  return (
    <div className={`h-[900px] w-[1600px] overflow-hidden bg-white ${ubuntu}`}>
      <SystemBar />
      <div className="flex">
        <Launcher />
        <div className="w-[1535px]">
          <TabStrip />
          <NavToolbar />
          <div className="flex h-[803px]">
            <HostingPage />
            <Scrollbar />
          </div>
        </div>
      </div>
    </div>
  );
}
